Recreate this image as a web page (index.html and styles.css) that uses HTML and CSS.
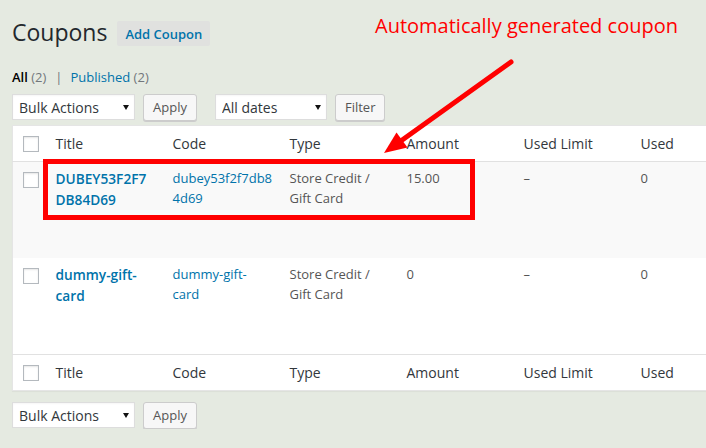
FILE: index.html
```html
<!DOCTYPE html>
<html>
<head>
  <meta charset="utf-8">
  <title>Coupons</title>
  <link rel="stylesheet" href="styles.css">
</head>
<body>
<div class="wrap">
  <div class="page-head">
    <h1>Coupons</h1>
    <a class="add-new" href="#">Add Coupon</a>
  </div>

  <ul class="subsubsub">
    <li><a class="current" href="#">All <span class="count">(2)</span></a><span class="sep">|</span></li>
    <li><a href="#">Published <span class="count">(2)</span></a></li>
  </ul>

  <div class="tablenav">
    <span class="select-box bulk"><select><option>Bulk Actions</option></select></span>
    <button class="button">Apply</button>
    <span class="select-box dates"><select><option>All dates</option></select></span>
    <button class="button">Filter</button>
  </div>

  <table class="list-table">
    <colgroup>
      <col class="c-check">
      <col class="c-data"><col class="c-data"><col class="c-data">
      <col class="c-data"><col class="c-data"><col class="c-data">
    </colgroup>
    <thead>
      <tr>
        <th class="check-col"><span class="cb"></span></th>
        <th>Title</th>
        <th>Code</th>
        <th>Type</th>
        <th>Amount</th>
        <th>Used Limit</th>
        <th>Used</th>
      </tr>
    </thead>
    <tbody>
      <tr class="alt">
        <td class="check-col"><span class="cb"></span></td>
        <td><a class="row-title" href="#">DUBEY53F2F7<br>DB84D69</a></td>
        <td><a href="#">dubey53f2f7db8<br>4d69</a></td>
        <td>Store Credit /<br>Gift Card</td>
        <td>15.00</td>
        <td>–</td>
        <td>0</td>
      </tr>
      <tr>
        <td class="check-col"><span class="cb"></span></td>
        <td><a class="row-title" href="#">dummy-gift-<br>card</a></td>
        <td><a href="#">dummy-gift-<br>card</a></td>
        <td>Store Credit /<br>Gift Card</td>
        <td>0</td>
        <td>–</td>
        <td>0</td>
      </tr>
    </tbody>
    <tfoot>
      <tr>
        <th class="check-col"><span class="cb"></span></th>
        <th>Title</th>
        <th>Code</th>
        <th>Type</th>
        <th>Amount</th>
        <th>Used Limit</th>
        <th>Used</th>
      </tr>
    </tfoot>
  </table>

  <div class="tablenav bottom">
    <span class="select-box bulk"><select><option>Bulk Actions</option></select></span>
    <button class="button">Apply</button>
  </div>
</div>

<!-- annotation drawn over the screenshot -->
<div class="note">Automatically generated coupon</div>
<div class="highlight"></div>
<svg class="arrow" width="706" height="448" viewBox="0 0 706 448">
  <line x1="511" y1="62" x2="398" y2="143" stroke="#f00" stroke-width="5" stroke-linecap="round"/>
  <polygon points="384,153 396.5,132.5 407.5,147.5" fill="#f00"/>
</svg>
</body>
</html>
```

FILE: styles.css
```css
/* page */
body {
  margin: 0;
  background: #e5eae1;
  font-family: "Open Sans", sans-serif;
  font-size: 13px;
  color: #444;
  overflow: hidden;
}
a {
  color: #0073aa;
  text-decoration: none;
}
.wrap {
  padding: 0 0 0 12px;
}

/* heading */
.page-head {
  display: flex;
  align-items: center;
  gap: 10px;
  padding-top: 18px;
}
h1 {
  margin: 0;
  font-size: 23px;
  font-weight: 400;
  line-height: 29px;
  color: #23282d;
}
.add-new {
  display: inline-block;
  padding: 0 8px;
  height: 25px;
  line-height: 26px;
  background: #e0e1df;
  border-radius: 2px;
  font-size: 13px;
  font-weight: 600;
  margin-top: 1px;
}

/* views */
.subsubsub {
  list-style: none;
  display: flex;
  margin: 20px 0 0;
  padding: 0;
  font-size: 13px;
  line-height: 20px;
}
.subsubsub .current {
  color: #000;
  font-weight: 600;
}
.subsubsub .count {
  color: #72777c;
  font-weight: 400;
}
.subsubsub .sep {
  color: #72777c;
  margin: 0 8px 0 9px;
}

/* filters */
.tablenav {
  display: flex;
  align-items: center;
  height: 28px;
  margin-top: 6px;
}
.tablenav.bottom {
  margin-top: 10px;
}
.select-box {
  position: relative;
  display: inline-block;
  height: 26px;
  margin-right: 8px;
}
.select-box select {
  appearance: none;
  -webkit-appearance: none;
  height: 26px;
  border: 1px solid #ddd;
  background: #fff;
  padding: 0 6px;
  font-family: "Open Sans", sans-serif;
  font-size: 14px;
  color: #32373c;
  border-radius: 0;
  box-shadow: inset 0 1px 2px rgba(0,0,0,.04);
}
.select-box::after {
  content: "";
  position: absolute;
  right: 6px;
  top: 11px;
  border-left: 3px solid transparent;
  border-right: 3px solid transparent;
  border-top: 5px solid #111;
}
.bulk select {
  width: 123px;
}
.dates select {
  width: 112px;
}
.dates {
  margin-left: 10px;
}
.button {
  height: 27px;
  padding: 0 9px;
  background: #f7f7f7;
  border: 1px solid #ccc;
  border-radius: 3px;
  box-shadow: 0 1px 0 #ccc;
  font-family: "Open Sans", sans-serif;
  font-size: 13px;
  color: #555;
  margin-right: 8px;
}

/* table */
.list-table {
  margin-top: 4px;
  width: 736px;
  table-layout: fixed;
  border-collapse: collapse;
  background: #fff;
  border: 1px solid #e5e5e5;
  box-shadow: 0 1px 1px rgba(0,0,0,.04);
}
.c-check {
  width: 33px;
}
.c-data {
  width: 117px;
}
.list-table th,
.list-table td {
  padding: 0 10px;
  text-align: left;
  vertical-align: top;
}
.list-table th {
  height: 35px;
  vertical-align: middle;
  font-size: 14px;
  font-weight: 400;
  color: #32373c;
}
.list-table thead th {
  border-bottom: 1px solid #e1e1e1;
}
.list-table tfoot th {
  border-top: 1px solid #e1e1e1;
}
.list-table td {
  height: 81px;
  padding-top: 7px;
  padding-bottom: 8px;
  line-height: 19.5px;
  color: #555;
}
.list-table tr.alt td {
  background: #f9f9f9;
}
.list-table .check-col {
  padding: 0 0 0 10px;
}
.list-table td.check-col {
  padding-top: 10px;
}
.cb {
  display: block;
  width: 14px;
  height: 14px;
  border: 1px solid #b4b9be;
  background: #fff;
  box-shadow: inset 0 1px 2px rgba(0,0,0,.1);
}
.row-title {
  font-size: 13.7px;
  font-weight: 600;
}

/* annotation */
.note {
  position: absolute;
  left: 375px;
  top: 12px;
  font-size: 20px;
  color: #f00;
}
.highlight {
  position: absolute;
  left: 43px;
  top: 159px;
  width: 422px;
  height: 51px;
  border: 5px solid #f00;
}
.arrow {
  position: absolute;
  left: 0;
  top: 0;
}
```
